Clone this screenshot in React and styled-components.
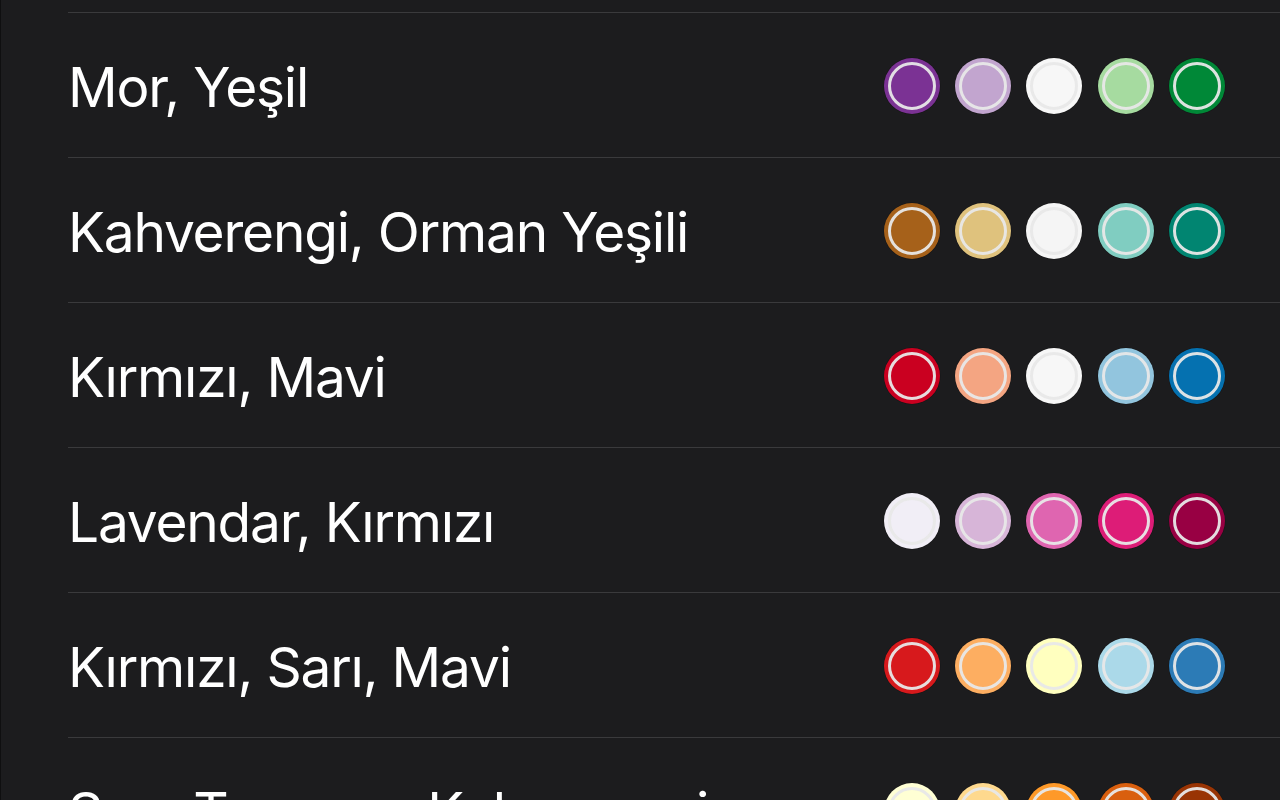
import React from "react";
import styled, { createGlobalStyle } from "styled-components";

const Global = createGlobalStyle`
  html, body {
    margin: 0;
    padding: 0;
    background: #1c1c1e;
    overflow: hidden;
  }
  body {
    font-family: Inter, "Noto Sans", "Liberation Sans", sans-serif;
    -webkit-font-smoothing: antialiased;
  }
`;

const Page = styled.div`
  width: 1280px;
  height: 800px;
  box-sizing: border-box;
  background: #1c1c1e;
  border-left: 1px solid #0f0f10;
  overflow: hidden;
`;

const List = styled.ul`
  list-style: none;
  margin: 0;
  padding: 0 0 0 67px;
`;

const TopCap = styled.li`
  height: 12px;
  border-bottom: 1px solid #3a3a3c;
`;

const Row = styled.li`
  height: 144px;
  display: flex;
  align-items: center;
  justify-content: space-between;
  padding: 0 55px 0 0;
  border-bottom: 1px solid #3a3a3c;
`;

const Title = styled.span`
  color: #ffffff;
  font-size: 55px;
  font-weight: 400;
  letter-spacing: -1.2px;
  padding-top: 4px;
  white-space: nowrap;
`;

const Swatches = styled.div`
  display: flex;
  gap: 15.3px;
  padding-top: 2px;
`;

const Swatch = styled.span`
  position: relative;
  width: 56px;
  height: 56px;
  border-radius: 50%;
  background: ${(p) => p.$c};
  box-shadow: 0 0 0 0.5px rgba(0, 0, 0, 0.25);
  &::after {
    content: "";
    position: absolute;
    inset: 4px;
    border-radius: 50%;
    border: 3px solid rgba(232, 232, 232, 0.95);
  }
`;

const rows = [
  { name: "Mor, Yeşil", colors: ["#7b3294", "#c2a5cf", "#f7f7f7", "#a6dba0", "#008837"] },
  { name: "Kahverengi, Orman Yeşili", colors: ["#a6611a", "#dfc27d", "#f5f5f5", "#80cdc1", "#018571"] },
  { name: "Kırmızı, Mavi", colors: ["#ca0020", "#f4a582", "#f7f7f7", "#92c5de", "#0571b0"] },
  { name: "Lavendar, Kırmızı", colors: ["#f1eef6", "#d7b5d8", "#df65b0", "#dd1c77", "#980043"] },
  { name: "Kırmızı, Sarı, Mavi", colors: ["#d7191c", "#fdae61", "#ffffbf", "#abd9e9", "#2c7bb6"] },
  { name: "Sarı, Turuncu, Kahverengi", colors: ["#ffffd4", "#fed98e", "#fe9929", "#d95f0e", "#993404"] },
];

export default function App() {
  return (
    <Page>
      <Global />
      <List>
        <TopCap />
        {rows.map((r) => (
          <Row key={r.name}>
            <Title>{r.name}</Title>
            <Swatches>
              {r.colors.map((c, i) => (
                <Swatch key={i} $c={c} />
              ))}
            </Swatches>
          </Row>
        ))}
      </List>
    </Page>
  );
}
